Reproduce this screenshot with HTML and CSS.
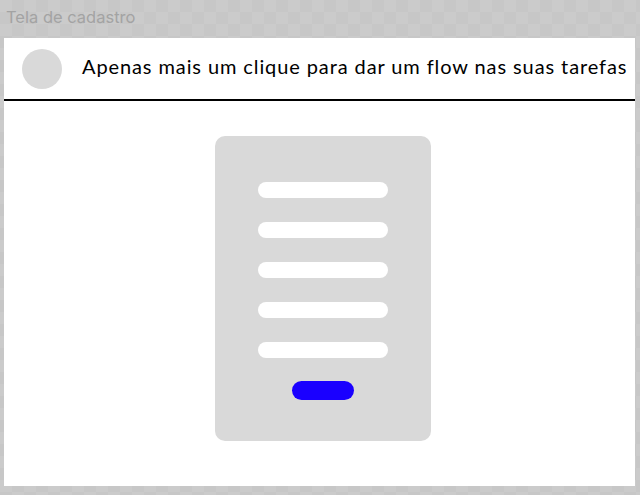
FILE: index.html
```html
<!DOCTYPE html>
<html lang="pt">
<head>
<meta charset="utf-8">
<title>Tela de cadastro</title>
<link rel="stylesheet" href="styles.css">
</head>
<body>
<div class="canvas">
  <div class="frame-label">Tela de cadastro</div>
  <div class="frame">
    <header class="header">
      <div class="avatar"></div>
      <h1 class="headline">Apenas mais um clique para dar um flow nas suas tarefas</h1>
    </header>
    <main class="main">
      <form class="card">
        <div class="field"></div>
        <div class="field"></div>
        <div class="field"></div>
        <div class="field"></div>
        <div class="field"></div>
        <div class="submit"></div>
      </form>
    </main>
  </div>
</div>
</body>
</html>
```

FILE: styles.css
```css
* { box-sizing: border-box; }
html, body {
  margin: 0;
  padding: 0;
  width: 640px;
  height: 495px;
  overflow: hidden;
}
body {
  background-color: #c9c9c9;
  background-image: conic-gradient(#c7c7c7 25%, #cbcbcb 0 50%, #c7c7c7 0 75%, #cbcbcb 0);
  background-size: 24px 24px;
  font-family: Inter, "Liberation Sans", sans-serif;
}
.canvas {
  display: flex;
  flex-direction: column;
  padding-left: 4px;
}
.frame-label {
  height: 38px;
  padding-top: 6px;
  padding-left: 2px;
  font-size: 16.5px;
  line-height: 22px;
  color: #a3a3a3;
}
.frame {
  width: 631px;
  height: 448px;
  background: #ffffff;
  display: flex;
  flex-direction: column;
}
.header {
  height: 63px;
  border-bottom: 2px solid #000000;
  display: flex;
  align-items: center;
  padding-left: 18px;
  gap: 20px;
}
.avatar {
  width: 40px;
  height: 40px;
  border-radius: 50%;
  background: #d9d9d9;
  flex: none;
}
.headline {
  margin: 0 0 5px 0;
  font-family: Lato, "Noto Sans", sans-serif;
  font-weight: 400;
  font-size: 20px;
  line-height: 24px;
  letter-spacing: 0.9px;
  color: #000000;
  white-space: nowrap;
}
.main {
  display: flex;
  justify-content: center;
  padding-top: 35px;
  padding-left: 7px;
}
.card {
  width: 216px;
  height: 305px;
  background: #d9d9d9;
  border-radius: 10px;
  display: flex;
  flex-direction: column;
  align-items: center;
  padding-top: 46px;
  gap: 24px;
  margin: 0;
}
.field {
  width: 130px;
  height: 16px;
  border-radius: 8px;
  background: #ffffff;
  flex: none;
}
.submit {
  width: 62px;
  height: 19px;
  border-radius: 10px;
  background: #1a00ff;
  margin-top: -1px;
  flex: none;
}
```
